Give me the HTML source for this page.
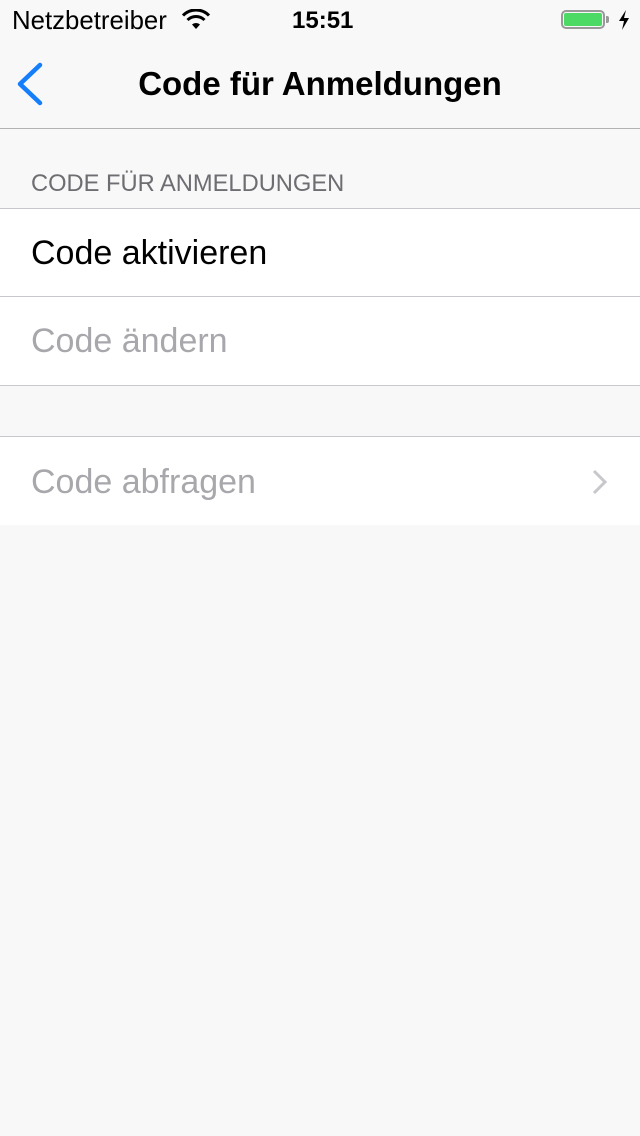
<!DOCTYPE html>
<html><head><meta charset="utf-8"><style>
body{margin:0;width:640px;height:1136px;background:#f8f8f8;font-family:"Liberation Sans",sans-serif;position:relative;overflow:hidden}
.a{position:absolute}
.row{position:absolute;left:0;width:640px;background:#fff}
.line{position:absolute;height:1px;background:#c8c7cc}
</style></head><body>
<div class="a" style="left:12px;top:7px;font-size:25.8px;color:#000">Netzbetreiber</div>
<svg class="a" style="left:181px;top:9px" width="30" height="22" viewBox="0 0 30 22"><path d="M15 20 L11 15.5 A6 6 0 0 1 19 15.5Z" fill="#000"/><path d="M6.5 11 A12 12 0 0 1 23.5 11" stroke="#000" stroke-width="3" fill="none"/><path d="M2 6.5 A18 18 0 0 1 28 6.5" stroke="#000" stroke-width="3" fill="none"/></svg>
<div class="a" style="left:292px;top:7px;font-size:24px;font-weight:bold">15:51</div>
<div class="a" style="left:561px;top:10px;width:44px;height:19px;border:2px solid #999;border-radius:5px;box-sizing:border-box"></div>
<div class="a" style="left:564px;top:13px;width:38px;height:13px;background:#4cd964;border-radius:2px"></div>
<div class="a" style="left:606px;top:16px;width:3px;height:7px;background:#999;border-radius:0 2px 2px 0"></div>
<svg class="a" style="left:617px;top:10px" width="14" height="20" viewBox="0 0 14 20"><path d="M9 0 L2 11 H7 L5 20 L12 8 H7Z" fill="#000"/></svg>
<svg class="a" style="left:14px;top:62px" width="30" height="44" viewBox="0 0 30 44"><path d="M26 3 L6 22 L26 41" stroke="#157efb" stroke-width="4.5" fill="none" stroke-linecap="round" stroke-linejoin="round"/></svg>
<div class="a" style="left:0;width:640px;top:65px;text-align:center;font-size:33px;font-weight:bold;color:#000">Code für Anmeldungen</div>
<div class="line" style="left:0;width:640px;top:128px;background:#b2b2b2"></div>
<div class="a" style="left:31px;top:171px;font-size:23.7px;color:#6d6d72">CODE FÜR ANMELDUNGEN</div>
<div class="row" style="top:208px;height:177px"></div>
<div class="line" style="left:0;width:640px;top:208px"></div>
<div class="a" style="left:31px;top:234px;font-size:34px;color:#000">Code aktivieren</div>
<div class="line" style="left:0;width:640px;top:296px"></div>
<div class="a" style="left:31px;top:322px;font-size:34px;color:#a8a8ac">Code ändern</div>
<div class="line" style="left:0;width:640px;top:385px"></div>
<div class="row" style="top:436px;height:89px"></div>
<div class="line" style="left:0;width:640px;top:436px"></div>
<div class="a" style="left:31px;top:463px;font-size:34px;color:#a8a8ac">Code abfragen</div>
<svg class="a" style="left:590px;top:468px" width="20" height="28" viewBox="0 0 20 28"><path d="M4 3 L15 14 L4 25" stroke="#c7c7cc" stroke-width="3" fill="none"/></svg>
</body></html>
